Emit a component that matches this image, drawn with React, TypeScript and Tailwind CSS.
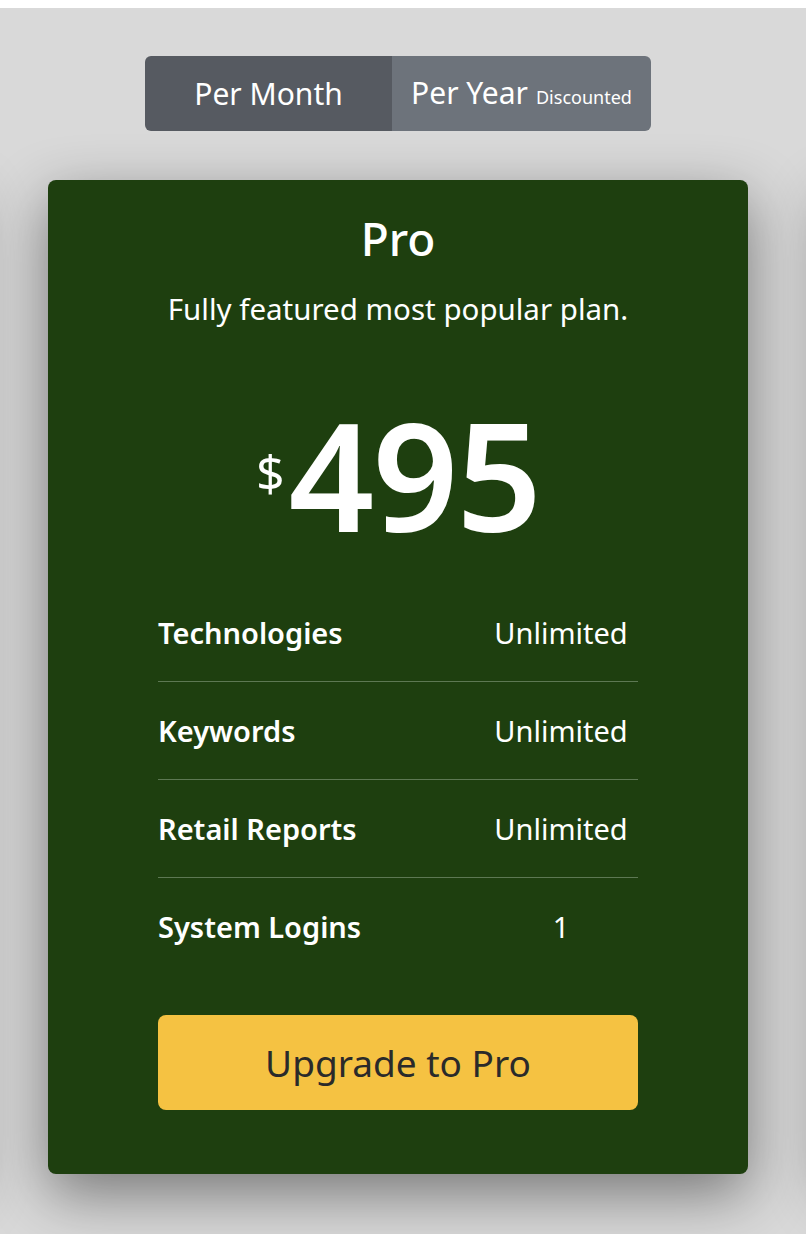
const features = [
  { label: 'Technologies', value: 'Unlimited' },
  { label: 'Keywords', value: 'Unlimited' },
  { label: 'Retail Reports', value: 'Unlimited' },
  { label: 'System Logins', value: '1' },
]

const cardShadow = 'shadow-[0_20px_60px_rgba(0,0,0,0.45)]'

function PlanCard() {
  return (
    <div
      className={`w-[700px] shrink-0 rounded-lg bg-[#1e3f0f] px-[110px] pb-[34px] pt-[28px] text-white ${cardShadow}`}
    >
      <h2 className="text-center text-[46px] font-medium leading-[60px]">Pro</h2>
      <p className="mt-[21px] text-center text-[29.5px] leading-[40px]">
        Fully featured most popular plan.
      </p>
      <div className="mt-[70px] flex items-start justify-center leading-none">
        <span className="mt-[48px] mr-[4px] text-[50px]">$</span>
        <span className="text-[150px] font-semibold tracking-[-2px]">495</span>
      </div>
      <div className="mt-[35px]">
        {features.map((f, i) => (
          <div
            key={f.label}
            className={`flex h-[98px] items-center text-[29px] ${
              i < features.length - 1 ? 'border-b border-[#5d7853]' : ''
            }`}
          >
            <span className="flex-1 font-semibold">{f.label}</span>
            <span className="w-[154px] text-center">{f.value}</span>
          </div>
        ))}
      </div>
      <button className="mt-[39px] h-[95px] w-full rounded-lg bg-[#f5c242] text-[37px] text-[#2a2a2a]">
        Upgrade to Pro
      </button>
    </div>
  )
}

function SideCard() {
  return <div className={`h-[994px] w-[700px] shrink-0 rounded-lg bg-[#1e3f0f] ${cardShadow}`} />
}

export default function App() {
  return (
    <div
      className="min-h-[1234px] bg-[#d9d9d9]"
      style={{ fontFamily: '"Noto Sans", Lato, sans-serif' }}
    >
      <div className="h-[8px] bg-white" />
      <div className="flex justify-center pr-[10px] pt-[48px]">
        <div className="flex h-[75px] w-[506px] overflow-hidden rounded-md text-white">
          <button className="w-[247px] bg-[#565a61] text-[30px]">Per Month</button>
          <button className="flex flex-1 items-baseline justify-center gap-[8px] bg-[#6d737b] pt-[14px] text-[30px]">
            Per Year <span className="text-[18px]">Discounted</span>
          </button>
        </div>
      </div>
      <div className="flex justify-center gap-[80px] overflow-hidden pb-[60px] pr-[10px] pt-[49px]">
        <SideCard />
        <PlanCard />
        <SideCard />
      </div>
    </div>
  )
}
